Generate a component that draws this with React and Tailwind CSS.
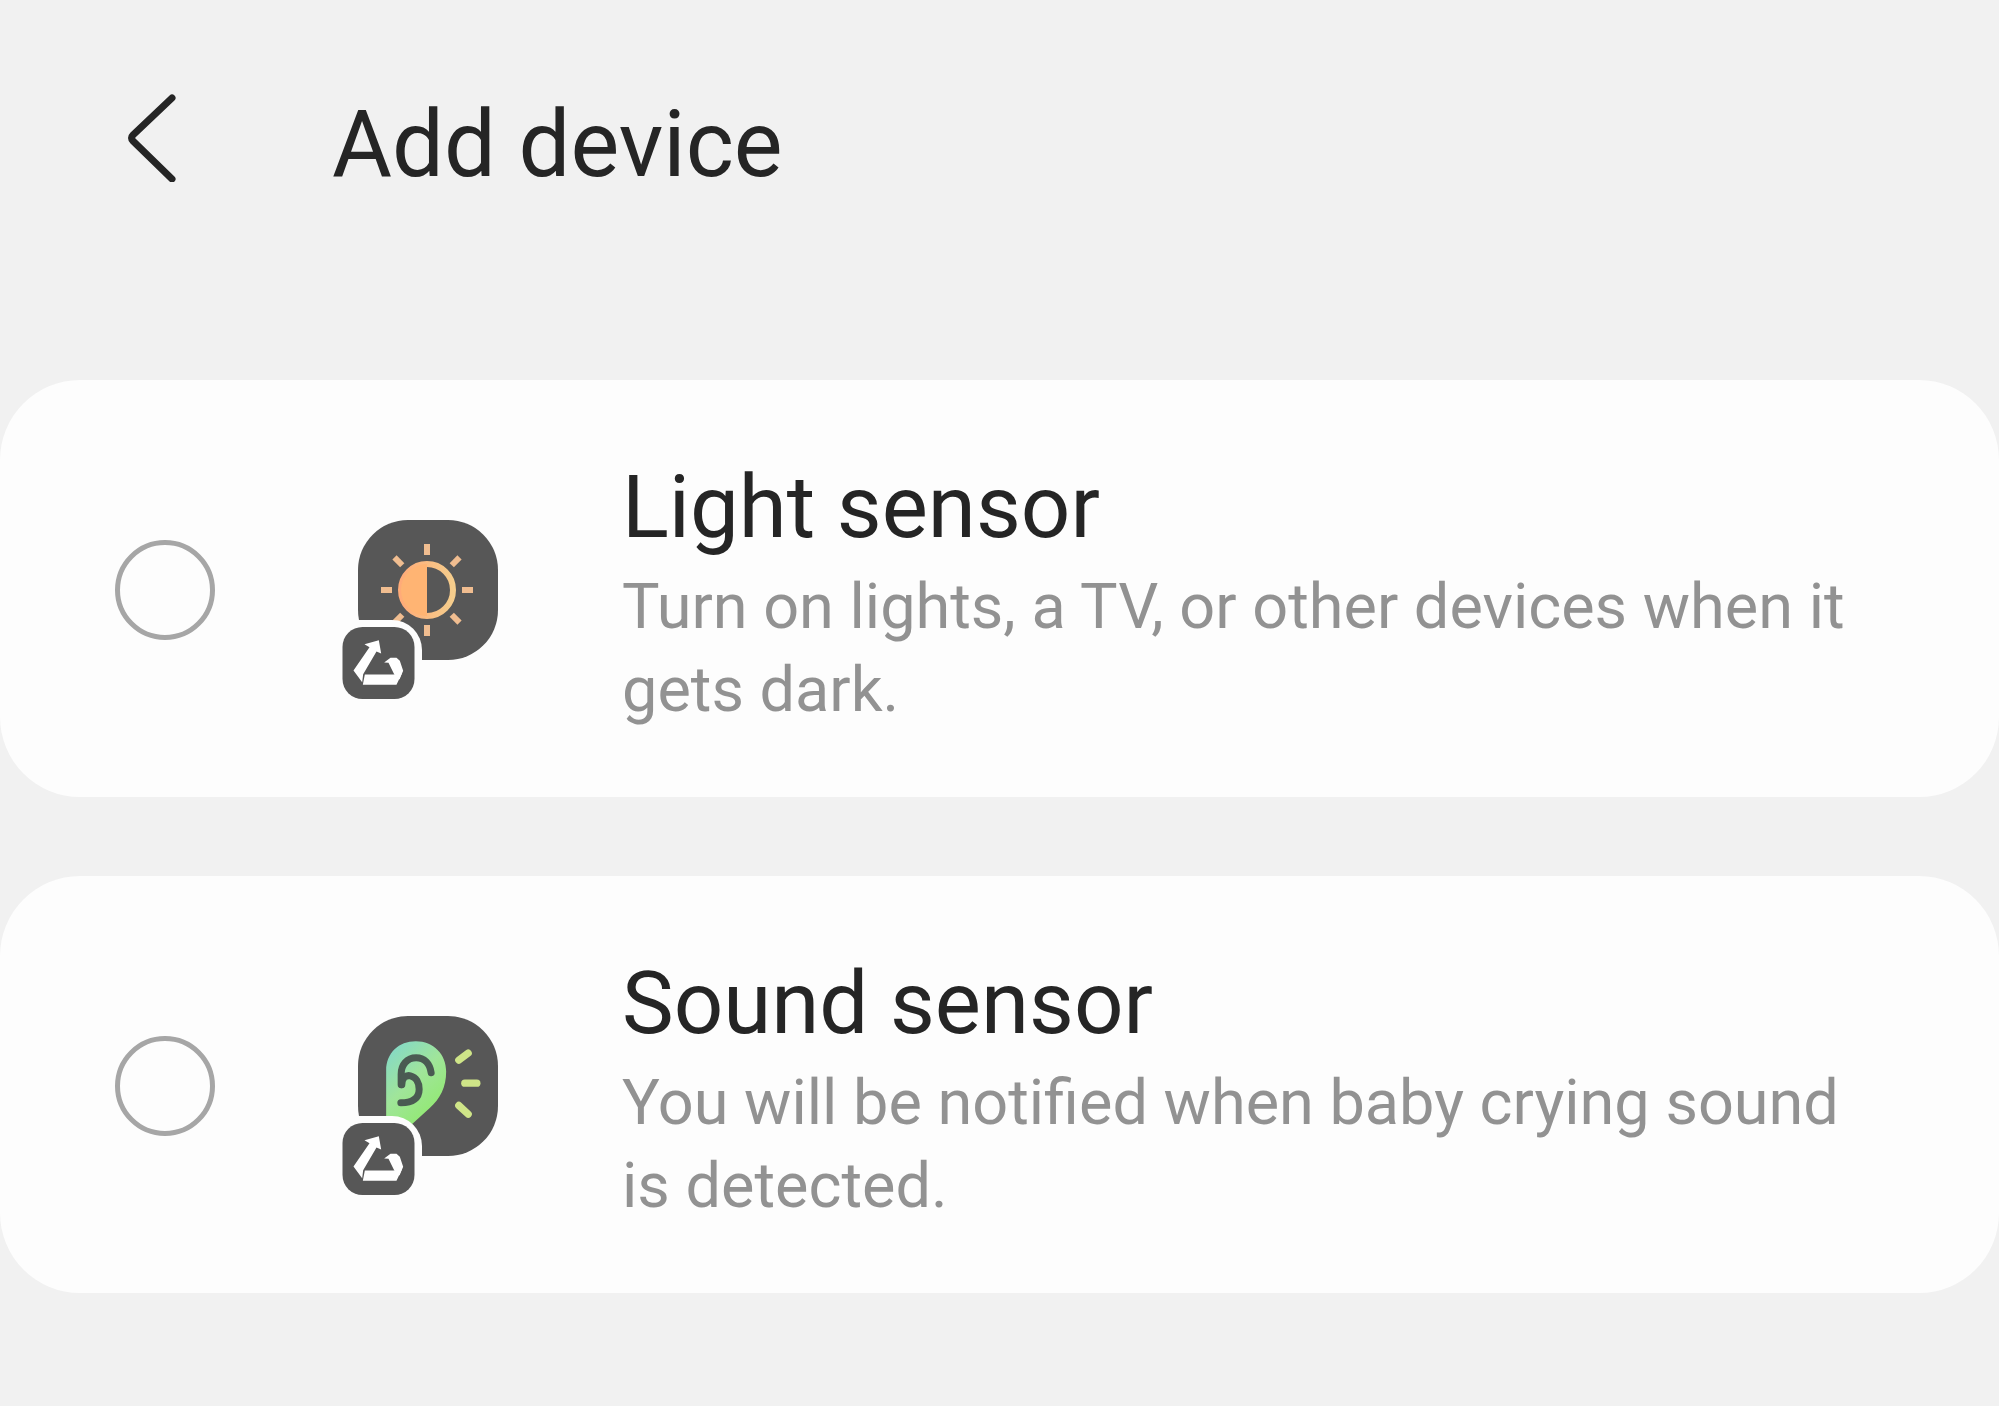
import React, { useState } from "react";

const LightIcon = () => (
  <g>
    <defs>
      <linearGradient id="sun" x1="0" y1="0" x2="1" y2="0">
        <stop offset="0" stopColor="#ffab78" />
        <stop offset="1" stopColor="#f5cd8c" />
      </linearGradient>
    </defs>
    <circle cx="69" cy="70" r="26" fill="none" stroke="url(#sun)" strokeWidth="6" />
    <path d="M69 44a26 26 0 0 0 0 52z" fill="#ffb473" />
    <g strokeWidth="6" stroke="#f0bd90">
      {[0, 45, 90, 135, 180, 225, 270, 315].map((angle) => (
        <path key={angle} d="M69 35V24" transform={`rotate(${angle} 69 70)`} />
      ))}
    </g>
  </g>
);

const SoundIcon = () => (
  <g transform="translate(-38.5 -20.5) scale(.3333)">
    <defs>
      <linearGradient id="ear" x1="0" y1="0" x2=".6" y2="1">
        <stop offset="0" stopColor="#7fd6cf" />
        <stop offset=".5" stopColor="#a0e59a" />
        <stop offset="1" stopColor="#8fea6a" />
      </linearGradient>
    </defs>
    <path
      d="M200 420V225C200 172 238 137 289 137C342 137 380 176 380 228C380 275 362 310 330 338L240 420Z"
      fill="url(#ear)"
    />
    <g fill="none" stroke="#4a5a52" strokeWidth="21" strokeLinecap="round" strokeLinejoin="round">
      <path d="M335 232C331 204 314 187 290 187C263 187 245 207 245 236V268" />
      <path d="M247 268C247 247 259 238 273 241C290 245 299 262 299 281C299 307 281 322 244 322" />
    </g>
    <g stroke="#cfe588" strokeWidth="22" strokeLinecap="round">
      <path d="M418 194L446 173" />
      <path d="M436 263H472" />
      <path d="M418 330L446 356" />
    </g>
  </g>
);

const RoutineBadge = () => (
  <g>
    <path d="M-24 100H34A30 30 0 0 1 64 130V188H-24Z" fill="#fdfdfd" />
    <rect x="-15.5" y="107" width="72" height="72" rx="20" fill="#575757" />
    <g transform="translate(-38.5 -20.5) scale(.3333)" fill="#fff">
      <path d="M135 434L178 422L185 462L171 456L131 524L128 548L102 513L150 443Z" />
      <path d="M136 525H221L247 522L231 556H130Z" />
      <path d="M194 489L213 475H231L241 484L251 514L240 540L224 524L207 490Z" />
    </g>
  </g>
);

const devices = [
  {
    id: "light",
    name: "Light sensor",
    description: "Turn on lights, a TV, or other devices when it gets dark.",
    Icon: LightIcon,
  },
  {
    id: "sound",
    name: "Sound sensor",
    description: "You will be notified when baby crying sound is detected.",
    Icon: SoundIcon,
  },
];

const DeviceCard = ({ device, checked, onSelect }) => {
  const { id, name, description, Icon } = device;

  return (
    <label
      htmlFor={id}
      className="flex items-center rounded-[80px] bg-[#fdfdfd] pt-[69px] pr-[120px] pb-[66px] pl-[115px]"
    >
      <input
        type="radio"
        id={id}
        name="device"
        checked={checked}
        onChange={() => onSelect(id)}
        className="size-[100px] shrink-0 appearance-none rounded-full border-[5px] border-[#a6a6a6] checked:border-[28px] checked:border-[#3e91ff]"
      />
      <svg viewBox="0 0 140 140" className="ml-[143px] size-[140px] shrink-0 overflow-visible" aria-hidden="true">
        <rect width="140" height="140" rx="50" fill="#575757" />
        <Icon />
        <RoutineBadge />
      </svg>
      <span className="ml-[124px] flex min-w-0 flex-1 flex-col">
        <span className="text-[87px] leading-[116px] text-[#252525]">{name}</span>
        <span className="text-[63px] leading-[83px] text-[#929292]">{description}</span>
      </span>
    </label>
  );
};

const App = () => {
  const [selected, setSelected] = useState(null);

  return (
    <div className="min-h-screen bg-[#f1f1f1] font-['Roboto',sans-serif]">
      <header className="flex items-start pt-[94px] pb-[185px] pl-[124px]">
        <button type="button" aria-label="Back" className="shrink-0">
          <svg viewBox="0 0 56 88" className="h-[88px] w-14" fill="none">
            <path
              d="M48 4L9 41Q6 44 9 47L48 85"
              stroke="#252525"
              strokeWidth="7"
              strokeLinecap="round"
            />
          </svg>
        </button>
        <h1 className="ml-[152px] text-[92px] leading-[101px] text-[#252525]">Add device</h1>
      </header>

      <main className="flex flex-col gap-[79px] pb-28">
        {devices.map((device) => (
          <DeviceCard
            key={device.id}
            device={device}
            checked={selected === device.id}
            onSelect={setSelected}
          />
        ))}
      </main>
    </div>
  );
};

export default App;
